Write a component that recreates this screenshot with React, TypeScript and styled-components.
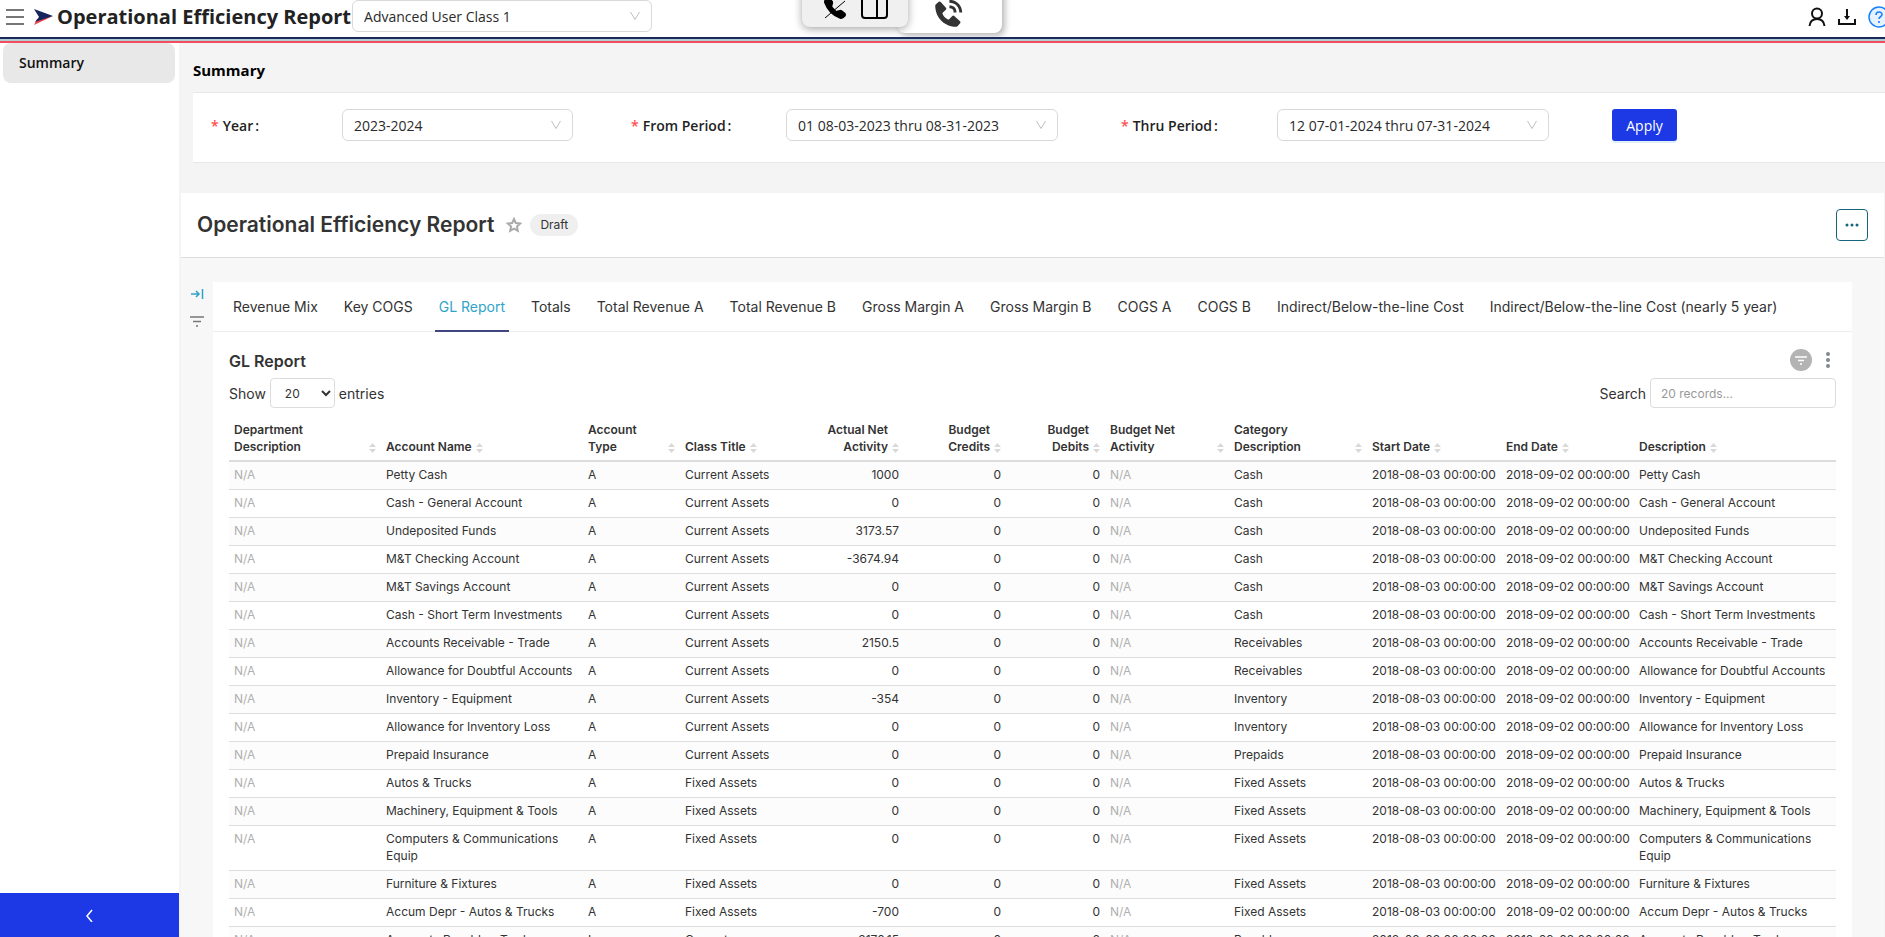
import React, { useId } from "react";
import styled, { createGlobalStyle } from "styled-components";
import { BiSolidPhoneCall } from "react-icons/bi";
import { BsTelephoneFill } from "react-icons/bs";

const ui = `"Open Sans", "Noto Sans", sans-serif`;
const report = `Inter, "Liberation Sans", sans-serif`;

const GlobalStyle = createGlobalStyle`
  *, *::before, *::after { box-sizing: border-box; }
  body { margin: 0; overflow: hidden; background: #fff; font-family: ${ui}; font-size: 14px; color: #222; }
  button, input, select { font: inherit; color: inherit; margin: 0; }
  h1, h2, h3 { margin: 0; }
`;

const Page = styled.div`
  height: 100vh;
  display: flex;
  flex-direction: column;
  overflow: hidden;
`;

const Header = styled.header`
  position: relative;
  flex: none;
  height: 37px;
  display: flex;
  align-items: flex-start;
  background: #fff;
  overflow: hidden;
`;

const IconButton = styled.button`
  display: inline-flex;
  align-items: center;
  justify-content: center;
  padding: 0;
  border: 0;
  background: none;
  cursor: pointer;
`;

const Brand = styled.div`
  display: flex;
  align-items: center;
  height: 33px;
  padding-left: 6px;
`;

const Logo = styled.svg`
  margin: 0 4px 0 9px;
`;

const AppTitle = styled.h1`
  margin-right: 1px;
  font-size: 20px;
  font-weight: 700;
  line-height: 33px;
  white-space: nowrap;
`;

const HeaderActions = styled.div`
  flex: none;
  display: flex;
  align-items: center;
  gap: 12px;
  height: 34px;
  margin: 0 -5px 0 auto;
`;

const Stripe = styled.div`
  flex: none;
  height: 6px;
  background: linear-gradient(#1b2b5e 0 2px, #b3ccd2 2px 4px, #f04e5e 4px 6px);
`;

const CallPanel = styled.div`
  position: absolute;
  top: -30px;
  left: 897px;
  width: 105px;
  height: 63px;
  padding: 27px 0 0 34px;
  border-radius: 8px;
  background: #fff;
  box-shadow: 3px 3px 6px rgba(0, 0, 0, 0.28);
  color: #333;
`;

const DockPanel = styled(CallPanel)`
  left: 802px;
  width: 106px;
  height: 57px;
  padding: 0;
  background: #f0f0f0;
  box-shadow: 0 2px 8px rgba(0, 0, 0, 0.35);
`;

const SelectBox = styled.div<{ $width?: string }>`
  position: relative;
  width: ${(p) => p.$width ?? "100%"};
  height: 32px;
  background: #fff;
`;

const SelectInput = styled.select`
  appearance: none;
  display: block;
  width: 100%;
  height: 32px;
  padding: 0 32px 0 11px;
  border: 1px solid #d9d9d9;
  border-radius: 6px;
  background: transparent;
  color: #2a2a2a;
  font-size: 14px;
`;

const SelectArrow = styled.svg`
  position: absolute;
  top: 10px;
  right: 11px;
  pointer-events: none;
`;

const Body = styled.div`
  flex: 1;
  min-height: 0;
  display: flex;
`;

const Sidebar = styled.nav`
  flex: none;
  width: 179px;
  display: flex;
  flex-direction: column;
  justify-content: space-between;
  background: #fff;
`;

const SideLink = styled.a`
  margin: 0 4px 0 3px;
  padding: 0 16px;
  border-radius: 8px;
  background: #e8e8e8;
  color: #111;
  font-size: 14px;
  font-weight: 600;
  line-height: 40px;
  text-decoration: none;
`;

const CollapseButton = styled(IconButton)`
  height: 44px;
  background: #1d39e6;
`;

const Main = styled.main`
  flex: 1;
  min-width: 0;
  display: flex;
  flex-direction: column;
  background: #f4f4f4;
`;

const SectionTitle = styled.h2`
  margin-bottom: 6px;
  padding: 11px 14px 0;
  color: #000;
  font-size: 15px;
  font-weight: 700;
  line-height: 32px;
`;

const FilterForm = styled.form`
  flex: none;
  display: grid;
  grid-template-columns: 131fr 289fr 155fr 335fr 156fr 335fr 273fr;
  align-items: center;
  margin-left: 14px;
  padding: 16px 0 21px 18px;
  border: solid #e8e8e8;
  border-width: 1px 0;
  background: #fff;
`;

const FieldLabel = styled.label`
  color: #222;
  font-weight: 600;
  white-space: nowrap;

  &::before {
    content: "*";
    margin-right: 4px;
    color: #ff4d4f;
  }
`;

const Colon = styled.span`
  margin-left: 2px;
`;

const FieldCell = styled.div<{ $gap: number }>`
  padding-right: ${(p) => p.$gap}px;
`;

const ApplyButton = styled.button`
  justify-self: start;
  width: 65px;
  height: 32px;
  padding: 0;
  border: 0;
  border-radius: 3px;
  background: #1d39e6;
  box-shadow: 0 2px 0 #dff0f8;
  color: #fff;
  font-size: 14px;
  font-weight: 500;
`;

const Report = styled.section`
  flex: 1;
  min-height: 0;
  display: flex;
  flex-direction: column;
  margin: 30px 1px 0 2px;
  background: #f7f7f7;
  font-family: ${report};
  color: #333;
`;

const ReportHeader = styled.div`
  flex: none;
  display: flex;
  align-items: center;
  height: 65px;
  padding: 0 16px;
  border-bottom: 1px solid #dedede;
  background: #fff;
`;

const ReportTitle = styled.h2`
  font-size: 21px;
  font-weight: 600;
  line-height: 28px;
  white-space: nowrap;
`;

const StarButton = styled(IconButton)`
  margin: 0 8px 0 12px;
`;

const Badge = styled.span`
  padding: 0 10px;
  border-radius: 11px;
  background: #efefef;
  font-size: 12px;
  line-height: 22px;
`;

const MoreButton = styled(IconButton)`
  width: 32px;
  height: 32px;
  margin-left: auto;
  border: 1px solid #17647d;
  border-radius: 4px;
  background: #fff;
`;

const ReportBody = styled.div`
  flex: 1;
  min-height: 0;
  display: flex;
  padding: 24px 32px 0 0;
`;

const Rail = styled.div`
  flex: none;
  width: 32px;
  display: flex;
  flex-direction: column;
  align-items: center;
  gap: 13px;
  padding-top: 5px;
`;

const Card = styled.div`
  flex: 1;
  min-width: 0;
  background: #fff;
`;

const Tabs = styled.div`
  display: flex;
  gap: 18px;
  height: 50px;
  padding: 0 16px;
  border-bottom: 1px solid #ededed;
`;

const Tab = styled.button<{ $active?: boolean }>`
  height: 50px;
  padding: 0 4px;
  border: 0;
  border-bottom: 2px solid ${(p) => (p.$active ? "#3f4680" : "transparent")};
  background: none;
  color: ${(p) => (p.$active ? "#2fa4c8" : "#333")};
  font-size: 14px;
  white-space: nowrap;
`;

const Widget = styled.div`
  padding: 16px 16px 0;
`;

const WidgetBar = styled.div`
  display: flex;
  align-items: center;
  justify-content: space-between;
  height: 26px;
`;

const WidgetTitle = styled.h3`
  font-size: 16px;
  font-weight: 600;
`;

const WidgetActions = styled.div`
  display: flex;
  align-items: center;
  gap: 13px;
  padding: 0 5px 2px 0;
`;

const Controls = styled.div`
  display: flex;
  align-items: center;
  justify-content: space-between;
  margin: 4px 0 8px;
  font-size: 14px;
`;

const ControlLabel = styled.label`
  display: flex;
  align-items: center;
  gap: 4px;
`;

const PageSize = styled.select`
  width: 65px;
  height: 30px;
  padding: 0 4px 0 10px;
  border: 1px solid #dcdcdc;
  border-radius: 4px;
  background: #fff;
  font-size: 12px;
`;

const SearchInput = styled.input`
  width: 186px;
  height: 30px;
  padding: 0 10px;
  border: 1px solid #dcdcdc;
  border-radius: 4px;
  font-size: 12px;

  &::placeholder {
    color: #999;
  }
`;

const Table = styled.table`
  width: 100%;
  table-layout: fixed;
  border-collapse: separate;
  border-spacing: 0;
  font-size: 12px;
  line-height: 17px;
`;

const Th = styled.th`
  padding: 5px;
  border-bottom: 2px solid #dcdcdc;
  font-weight: 600;
  text-align: left;
  vertical-align: bottom;
`;

const ThInner = styled.div<{ $right?: boolean }>`
  display: flex;
  align-items: flex-end;
  justify-content: ${(p) => (p.$right ? "flex-end" : "flex-start")};
  gap: 4px;
  text-align: ${(p) => (p.$right ? "right" : "left")};
`;

const ThText = styled.span<{ $fill?: boolean }>`
  flex: ${(p) => (p.$fill ? "1" : "none")};
  white-space: pre-line;
`;

const SortIcon = styled.svg`
  flex: none;
  margin-bottom: 2px;
`;

const Tr = styled.tr`
  &:nth-child(odd) {
    background: #fcfcfc;
  }
`;

const Td = styled.td<{ $right?: boolean; $muted?: boolean; $nowrap?: boolean }>`
  padding: 4px 5px 6px;
  border-bottom: 1px solid #dedede;
  color: ${(p) => (p.$muted ? "#b0b0b0" : "#333")};
  text-align: ${(p) => (p.$right ? "right" : "left")};
  vertical-align: top;
  white-space: ${(p) => (p.$nowrap ? "nowrap" : "normal")};
`;

type Column = { label: string; width: number; right?: boolean };

const columns: Column[] = [
  { label: "Department\nDescription", width: 152 },
  { label: "Account Name", width: 202 },
  { label: "Account\nType", width: 97 },
  { label: "Class Title", width: 97 },
  { label: "Actual Net\nActivity", width: 127, right: true },
  { label: "Budget\nCredits", width: 102, right: true },
  { label: "Budget\nDebits", width: 99, right: true },
  { label: "Budget Net\nActivity", width: 124 },
  { label: "Category\nDescription", width: 138 },
  { label: "Start Date", width: 134 },
  { label: "End Date", width: 133 },
  { label: "Description", width: 202 },
];

const rows: [string, string, string, string, string][] = [
  ["Petty Cash", "A", "Current Assets", "1000", "Cash"],
  ["Cash - General Account", "A", "Current Assets", "0", "Cash"],
  ["Undeposited Funds", "A", "Current Assets", "3173.57", "Cash"],
  ["M&T Checking Account", "A", "Current Assets", "-3674.94", "Cash"],
  ["M&T Savings Account", "A", "Current Assets", "0", "Cash"],
  ["Cash - Short Term Investments", "A", "Current Assets", "0", "Cash"],
  ["Accounts Receivable - Trade", "A", "Current Assets", "2150.5", "Receivables"],
  ["Allowance for Doubtful Accounts", "A", "Current Assets", "0", "Receivables"],
  ["Inventory - Equipment", "A", "Current Assets", "-354", "Inventory"],
  ["Allowance for Inventory Loss", "A", "Current Assets", "0", "Inventory"],
  ["Prepaid Insurance", "A", "Current Assets", "0", "Prepaids"],
  ["Autos & Trucks", "A", "Fixed Assets", "0", "Fixed Assets"],
  ["Machinery, Equipment & Tools", "A", "Fixed Assets", "0", "Fixed Assets"],
  ["Computers & Communications Equip", "A", "Fixed Assets", "0", "Fixed Assets"],
  ["Furniture & Fixtures", "A", "Fixed Assets", "0", "Fixed Assets"],
  ["Accum Depr - Autos & Trucks", "A", "Fixed Assets", "-700", "Fixed Assets"],
  ["Accounts Payable - Trade", "L", "Current Liabilities", "3170.15", "Payables"],
];

const tabs = [
  "Revenue Mix",
  "Key COGS",
  "GL Report",
  "Totals",
  "Total Revenue A",
  "Total Revenue B",
  "Gross Margin A",
  "Gross Margin B",
  "COGS A",
  "COGS B",
  "Indirect/Below-the-line Cost",
  "Indirect/Below-the-line Cost (nearly 5 year)",
];

function Dropdown({ value, id, label, width }: { value: string; id?: string; label?: string; width?: string }) {
  return (
    <SelectBox $width={width}>
      <SelectInput id={id} aria-label={label} defaultValue={value}>
        <option>{value}</option>
      </SelectInput>
      <SelectArrow width="12" height="12" viewBox="0 0 12 12" fill="none" stroke="#bfbfbf">
        <path d="M1.5 2 6 9.5 10.5 2" />
      </SelectArrow>
    </SelectBox>
  );
}

function Field({ label, value, gap }: { label: string; value: string; gap: number }) {
  const id = useId();
  return (
    <>
      <FieldLabel htmlFor={id}>
        {label}
        <Colon>:</Colon>
      </FieldLabel>
      <FieldCell $gap={gap}>
        <Dropdown id={id} value={value} />
      </FieldCell>
    </>
  );
}

export default function App() {
  return (
    <Page>
      <GlobalStyle />
      <Header>
        <Brand>
          <IconButton aria-label="Menu">
            <svg width="18" height="18" viewBox="0 0 18 18" stroke="#777" strokeWidth="2">
              <path d="M0 2h18M0 9h18M0 16h18" />
            </svg>
          </IconButton>
          <Logo width="20" height="18" viewBox="0 0 20 18">
            <path d="M1 17 4 11l2 0 14-3z" fill="#f2404f" />
            <path d="M1 1l19 7L2 14l4-5z" fill="#14265c" />
          </Logo>
          <AppTitle>Operational Efficiency Report</AppTitle>
        </Brand>
        <Dropdown value="Advanced User Class 1" label="User class" width="300px" />
        <CallPanel>
          <BiSolidPhoneCall size={34} />
        </CallPanel>
        <DockPanel>
          <svg width="106" height="57" viewBox="0 0 106 57" fill="none" stroke="#000">
            <g transform="translate(22 27)">
              <BsTelephoneFill size={22} fill="#000" stroke="#000" />
            </g>
            <path d="M23 48 43 31" />
            <rect x="60" y="22" width="25" height="26" rx="3" strokeWidth="2" />
            <path d="M75 22v26" strokeWidth="2" />
          </svg>
        </DockPanel>
        <HeaderActions>
          <IconButton aria-label="Account">
            <svg width="18" height="20" viewBox="0 0 18 20" fill="none" stroke="#111" strokeWidth="2">
              <circle cx="9" cy="6.500" r="5" />
              <path d="M1.500 19c.5-4.500 3.500-7 7.500-7s7 2.500 7.500 7" />
            </svg>
          </IconButton>
          <IconButton aria-label="Download">
            <svg width="18" height="18" viewBox="0 0 18 18" fill="none" stroke="#111" strokeWidth="2">
              <path d="M1 11v5h16v-5M9 1v10" />
              <path d="M6 8h6l-3 4z" fill="#111" stroke="none" />
            </svg>
          </IconButton>
          <IconButton aria-label="Help">
            <svg width="22" height="22" viewBox="0 0 22 22" fill="none" stroke="#1a80ff" strokeWidth="2">
              <circle cx="11" cy="11" r="10" fill="#e6f3ff" strokeWidth="1.500" />
              <path d="M8 9c0-4 6-4 6-.5 0 2.500-3 2-3 4.500M11 15v2" strokeWidth="1.600" />
            </svg>
          </IconButton>
        </HeaderActions>
      </Header>
      <Stripe />
      <Body>
        <Sidebar>
          <SideLink href="#summary">Summary</SideLink>
          <CollapseButton aria-label="Collapse sidebar">
            <svg width="10" height="14" viewBox="0 0 10 14" fill="none" stroke="#fff" strokeWidth="1.500">
              <path d="M7 2 2 8l5 6" />
            </svg>
          </CollapseButton>
        </Sidebar>
        <Main>
          <SectionTitle>Summary</SectionTitle>
          <FilterForm onSubmit={(e) => e.preventDefault()}>
            <Field label="Year" value="2023-2024" gap={58} />
            <Field label="From Period" value="01 08-03-2023 thru 08-31-2023" gap={63} />
            <Field label="Thru Period" value="12 07-01-2024 thru 07-31-2024" gap={63} />
            <ApplyButton>Apply</ApplyButton>
          </FilterForm>
          <Report>
            <ReportHeader>
              <ReportTitle>Operational Efficiency Report</ReportTitle>
              <StarButton aria-label="Favorite">
                <svg width="16" height="16" viewBox="0 0 16 16" fill="none" stroke="#aaa" strokeWidth="2">
                  <path d="M8 2 9.800 6l4.400.5-3.300 3 .9 4.300L8 11.700l-3.800 2.100.9-4.300-3.300-3L6.200 6z" />
                </svg>
              </StarButton>
              <Badge>Draft</Badge>
              <MoreButton aria-label="More options">
                <svg width="14" height="4" viewBox="0 0 14 4" fill="#17647d">
                  <circle cx="2" cy="2" r="1.500" />
                  <circle cx="7" cy="2" r="1.500" />
                  <circle cx="12" cy="2" r="1.500" />
                </svg>
              </MoreButton>
            </ReportHeader>
            <ReportBody>
              <Rail>
                <IconButton aria-label="Expand filters">
                  <svg width="14" height="14" viewBox="0 0 14 14" fill="none" stroke="#2fa4c8" strokeWidth="1.500">
                    <path d="M1 7h8M6 4l3 3-3 3M12.500 2v10" />
                  </svg>
                </IconButton>
                <IconButton aria-label="Filters">
                  <svg width="14" height="14" viewBox="0 0 14 14" fill="none" stroke="#777" strokeWidth="1.500">
                    <path d="M0 3h14M3 7.500h8M6 12h2" />
                  </svg>
                </IconButton>
              </Rail>
              <Card>
                <Tabs role="tablist">
                  {tabs.map((t) => (
                    <Tab key={t} role="tab" aria-selected={t === "GL Report"} $active={t === "GL Report"}>
                      {t}
                    </Tab>
                  ))}
                </Tabs>
                <Widget>
                  <WidgetBar>
                    <WidgetTitle>GL Report</WidgetTitle>
                    <WidgetActions>
                      <IconButton aria-label="Widget filters">
                        <svg width="22" height="22" viewBox="0 0 22 22" fill="none" stroke="#fff" strokeWidth="1.500">
                          <circle cx="11" cy="11" r="11" fill="#b3b3b3" stroke="none" />
                          <path d="M5 8h12M8 11.500h6M10 15h2" />
                        </svg>
                      </IconButton>
                      <IconButton aria-label="Widget menu">
                        <svg width="6" height="18" viewBox="0 0 6 18" fill="#7d8a91">
                          <circle cx="3" cy="3" r="2" />
                          <circle cx="3" cy="9" r="2" />
                          <circle cx="3" cy="15" r="2" />
                        </svg>
                      </IconButton>
                    </WidgetActions>
                  </WidgetBar>
                  <Controls>
                    <ControlLabel>
                      Show
                      <PageSize defaultValue="20">
                        <option>20</option>
                        <option>50</option>
                      </PageSize>
                      entries
                    </ControlLabel>
                    <ControlLabel>
                      Search
                      <SearchInput placeholder="20 records..." />
                    </ControlLabel>
                  </Controls>
                  <Table>
                    <colgroup>
                      {columns.map((c) => (
                        <col key={c.label} width={c.width} />
                      ))}
                    </colgroup>
                    <thead>
                      <tr>
                        {columns.map((c) => (
                          <Th key={c.label}>
                            <ThInner $right={c.right}>
                              <ThText $fill={c.label.includes("\n")}>{c.label}</ThText>
                              <SortIcon width="7" height="10" viewBox="0 0 7 10" fill="#d9d9d9">
                                <path d="M3.500 0 7 4H0zM3.500 10 0 6h7z" />
                              </SortIcon>
                            </ThInner>
                          </Th>
                        ))}
                      </tr>
                    </thead>
                    <tbody>
                      {rows.map(([name, type, cls, net, category]) => (
                        <Tr key={name}>
                          <Td $muted>N/A</Td>
                          <Td>{name}</Td>
                          <Td>{type}</Td>
                          <Td>{cls}</Td>
                          <Td $right>{net}</Td>
                          <Td $right>0</Td>
                          <Td $right>0</Td>
                          <Td $muted>N/A</Td>
                          <Td>{category}</Td>
                          <Td $nowrap>2018-08-03 00:00:00</Td>
                          <Td $nowrap>2018-09-02 00:00:00</Td>
                          <Td>{name}</Td>
                        </Tr>
                      ))}
                    </tbody>
                  </Table>
                </Widget>
              </Card>
            </ReportBody>
          </Report>
        </Main>
      </Body>
    </Page>
  );
}
